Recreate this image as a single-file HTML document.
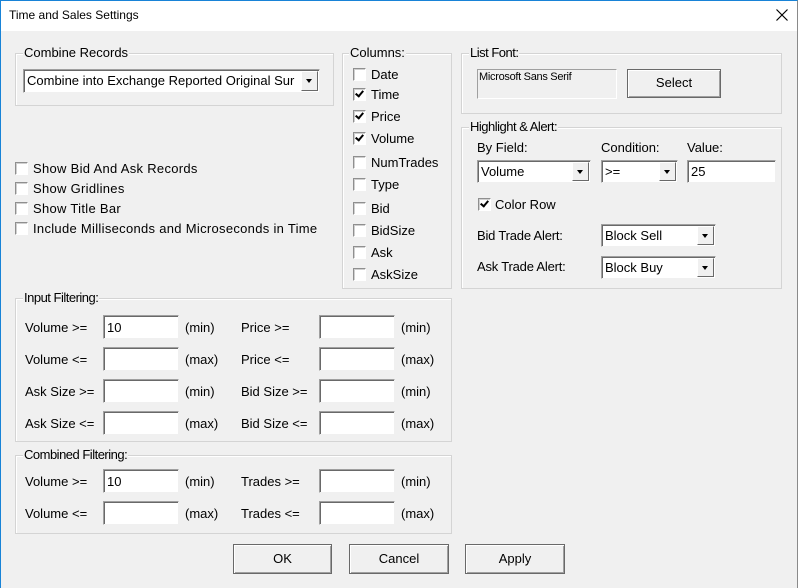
<!DOCTYPE html>
<html><head><style>
*{box-sizing:border-box;margin:0;padding:0}
body{width:798px;height:588px;overflow:hidden;background:#f0f0f0;font-family:"Liberation Sans",Arial,sans-serif;font-size:13px;color:#000;position:relative}
.a{position:absolute;white-space:nowrap}
.win{position:absolute;left:0;top:0;width:798px;height:588px;border:1px solid #1883d7;border-bottom:none;border-right:1px solid #8a8a8a}
.title{position:absolute;left:1px;top:1px;width:796px;height:30px;background:#fff}
.g{position:absolute;border:1px solid #d4d4d4;box-shadow:inset 1px 1px 0 #fff}
.gl{position:absolute;background:#f0f0f0;padding:0 1px;line-height:14px;top:-8px;left:7px;font-size:13px}
.gs{font-size:13px;letter-spacing:-0.5px}
.cb{position:absolute;width:13px;height:13px;border:1px solid #8f8f8f;border-right-color:#fff;border-bottom-color:#fff;background:#fff;box-shadow:inset 1px 1px 0 #d0d0d0}
.cb.k::after{content:"";position:absolute;left:3px;top:0px;width:3px;height:6px;border:solid #000;border-width:0 2px 2px 0;transform:rotate(40deg)}
.tb{position:absolute;background:#fff;border:1px solid #a0a0a0;border-right-color:#f0f0f0;border-bottom-color:#f0f0f0;box-shadow:inset 1px 1px 0 #696969;padding:4px 0 0 3px;line-height:16px}
.dd{position:absolute;width:17px;height:19px;right:1px;top:1px;background:#f0f0f0;border:1px solid #fff;border-right-color:#696969;border-bottom-color:#696969}
.dd::after{content:"";position:absolute;left:4px;top:7px;border:3.5px solid transparent;border-top:4px solid #000}
.btn{position:absolute;background:#f0f0f0;border:1px solid #696969;box-shadow:inset 1px 1px 0 #fff,inset -1px -1px 0 #a0a0a0;text-align:center;font-size:13px}
.lc{letter-spacing:0.3px}
</style></head><body>
<div class="win"></div>
<div class="title"></div>
<div class="a" style="left:9px;top:8px;font-size:12px">Time and Sales Settings</div>
<svg class="a" style="left:776px;top:9px" width="12" height="12"><path d="M0.5 0.5L11.5 11.5M11.5 0.5L0.5 11.5" stroke="#000" stroke-width="1.2"/></svg>

<div class="g" style="left:15px;top:53px;width:319px;height:53px"><div class="gl">Combine Records</div></div>
<div class="tb" style="left:23px;top:69px;width:297px;height:24px;padding-top:3px">Combine into Exchange Reported Original Sur<div class="dd" style="height:20px"></div></div>

<div class="cb" style="left:15px;top:162px"></div><div class="a lc" style="left:33px;top:161px">Show Bid And Ask Records</div>
<div class="cb" style="left:15px;top:182px"></div><div class="a lc" style="left:33px;top:181px">Show Gridlines</div>
<div class="cb" style="left:15px;top:202px"></div><div class="a lc" style="left:33px;top:201px">Show Title Bar</div>
<div class="cb" style="left:15px;top:222px"></div><div class="a lc" style="left:33px;top:221px">Include Milliseconds and Microseconds in Time</div>

<div class="g" style="left:342px;top:53px;width:110px;height:236px"><div class="gl" style="left:6px">Columns:</div></div>
<div class="cb" style="left:353px;top:68px"></div><div class="a" style="left:371px;top:67px">Date</div>
<div class="cb k" style="left:353px;top:88px"></div><div class="a" style="left:371px;top:87px">Time</div>
<div class="cb k" style="left:353px;top:110px"></div><div class="a" style="left:371px;top:109px">Price</div>
<div class="cb k" style="left:353px;top:132px"></div><div class="a" style="left:371px;top:131px">Volume</div>
<div class="cb" style="left:353px;top:156px"></div><div class="a" style="left:371px;top:155px">NumTrades</div>
<div class="cb" style="left:353px;top:178px"></div><div class="a" style="left:371px;top:177px">Type</div>
<div class="cb" style="left:353px;top:202px"></div><div class="a" style="left:371px;top:201px">Bid</div>
<div class="cb" style="left:353px;top:224px"></div><div class="a" style="left:371px;top:223px">BidSize</div>
<div class="cb" style="left:353px;top:246px"></div><div class="a" style="left:371px;top:245px">Ask</div>
<div class="cb" style="left:353px;top:268px"></div><div class="a" style="left:371px;top:267px">AskSize</div>

<div class="g" style="left:461px;top:53px;width:321px;height:61px"><div class="gl gs">List Font:</div></div>
<div class="a" style="left:477px;top:69px;width:140px;height:30px;border:1px solid #a0a0a0;border-right-color:#fff;border-bottom-color:#fff;font-size:11px;padding:1px 0 0 1px;letter-spacing:-0.3px">Microsoft Sans Serif</div>
<div class="btn" style="left:627px;top:69px;width:94px;height:29px;line-height:26px">Select</div>

<div class="g" style="left:461px;top:127px;width:321px;height:162px"><div class="gl gs">Highlight &amp; Alert:</div></div>
<div class="a" style="left:477px;top:140px">By Field:</div>
<div class="a" style="left:601px;top:140px">Condition:</div>
<div class="a" style="left:687px;top:140px">Value:</div>
<div class="tb" style="left:477px;top:160px;width:114px;height:23px;padding-top:3px">Volume<div class="dd"></div></div>
<div class="tb" style="left:601px;top:160px;width:77px;height:23px;padding-top:3px">&gt;=<div class="dd"></div></div>
<div class="tb" style="left:687px;top:160px;width:89px;height:23px;padding-top:3px">25</div>
<div class="cb k" style="left:478px;top:198px"></div><div class="a" style="left:495px;top:197px">Color Row</div>
<div class="a" style="left:477px;top:228px;letter-spacing:-0.2px">Bid Trade Alert:</div>
<div class="tb" style="left:601px;top:224px;width:115px;height:23px;padding-top:3px">Block Sell<div class="dd"></div></div>
<div class="a" style="left:477px;top:259px;letter-spacing:-0.2px">Ask Trade Alert:</div>
<div class="tb" style="left:601px;top:256px;width:115px;height:23px;padding-top:3px">Block Buy<div class="dd"></div></div>

<div class="g" style="left:15px;top:298px;width:437px;height:144px"><div class="gl gs">Input Filtering:</div></div>
<div class="a" style="left:25px;top:320px">Volume &gt;=</div><div class="tb" style="left:103px;top:315px;width:76px;height:24px">10</div><div class="a" style="left:185px;top:320px">(min)</div>
<div class="a" style="left:241px;top:320px">Price &gt;=</div><div class="tb" style="left:319px;top:315px;width:76px;height:24px"></div><div class="a" style="left:401px;top:320px">(min)</div>
<div class="a" style="left:25px;top:352px">Volume &lt;=</div><div class="tb" style="left:103px;top:347px;width:76px;height:24px"></div><div class="a" style="left:185px;top:352px">(max)</div>
<div class="a" style="left:241px;top:352px">Price &lt;=</div><div class="tb" style="left:319px;top:347px;width:76px;height:24px"></div><div class="a" style="left:401px;top:352px">(max)</div>
<div class="a" style="left:25px;top:384px">Ask Size &gt;=</div><div class="tb" style="left:103px;top:379px;width:76px;height:24px"></div><div class="a" style="left:185px;top:384px">(min)</div>
<div class="a" style="left:241px;top:384px">Bid Size &gt;=</div><div class="tb" style="left:319px;top:379px;width:76px;height:24px"></div><div class="a" style="left:401px;top:384px">(min)</div>
<div class="a" style="left:25px;top:416px">Ask Size &lt;=</div><div class="tb" style="left:103px;top:411px;width:76px;height:24px"></div><div class="a" style="left:185px;top:416px">(max)</div>
<div class="a" style="left:241px;top:416px">Bid Size &lt;=</div><div class="tb" style="left:319px;top:411px;width:76px;height:24px"></div><div class="a" style="left:401px;top:416px">(max)</div>

<div class="g" style="left:15px;top:455px;width:437px;height:79px"><div class="gl gs">Combined Filtering:</div></div>
<div class="a" style="left:25px;top:474px">Volume &gt;=</div><div class="tb" style="left:103px;top:469px;width:76px;height:24px">10</div><div class="a" style="left:185px;top:474px">(min)</div>
<div class="a" style="left:241px;top:474px">Trades &gt;=</div><div class="tb" style="left:319px;top:469px;width:76px;height:24px"></div><div class="a" style="left:401px;top:474px">(min)</div>
<div class="a" style="left:25px;top:506px">Volume &lt;=</div><div class="tb" style="left:103px;top:501px;width:76px;height:24px"></div><div class="a" style="left:185px;top:506px">(max)</div>
<div class="a" style="left:241px;top:506px">Trades &lt;=</div><div class="tb" style="left:319px;top:501px;width:76px;height:24px"></div><div class="a" style="left:401px;top:506px">(max)</div>

<div class="btn" style="left:233px;top:544px;width:99px;height:30px;line-height:27px">OK</div>
<div class="btn" style="left:349px;top:544px;width:100px;height:30px;line-height:27px">Cancel</div>
<div class="btn" style="left:465px;top:544px;width:100px;height:30px;line-height:27px">Apply</div>
</body></html>
